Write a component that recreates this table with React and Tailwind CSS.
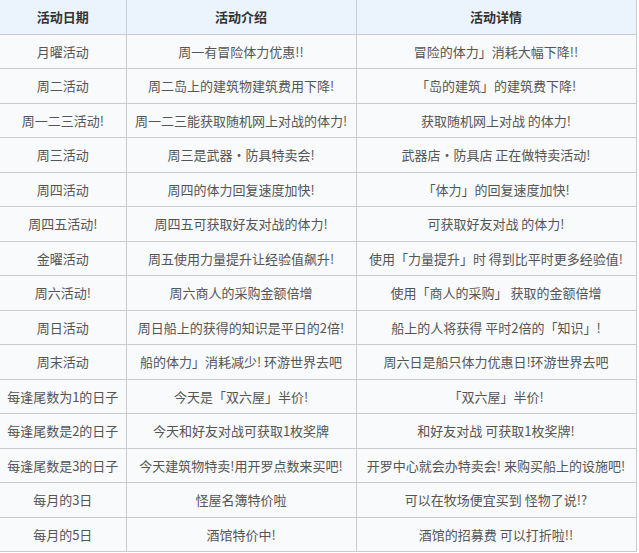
import React from "react";

const rows = [
  ["月曜活动", "周一有冒险体力优惠!!", "冒险的体力」消耗大幅下降!!"],
  ["周二活动", "周二岛上的建筑物建筑费用下降!", "「岛的建筑」的建筑费下降!"],
  ["周一二三活动!", "周一二三能获取随机网上对战的体力!", "获取随机网上对战 的体力!"],
  ["周三活动", "周三是武器・防具特卖会!", "武器店・防具店 正在做特卖活动!"],
  ["周四活动", "周四的体力回复速度加快!", "「体力」的回复速度加快!"],
  ["周四五活动!", "周四五可获取好友对战的体力!", "可获取好友对战 的体力!"],
  ["金曜活动", "周五使用力量提升让经验值飙升!", "使用「力量提升」时 得到比平时更多经验值!"],
  ["周六活动!", "周六商人的采购金额倍增", "使用「商人的采购」 获取的金额倍增"],
  ["周日活动", "周日船上的获得的知识是平日的2倍!", "船上的人将获得 平时2倍的「知识」!"],
  ["周末活动", "船的体力」消耗减少! 环游世界去吧", "周六日是船只体力优惠日!环游世界去吧"],
  ["每逢尾数为1的日子", "今天是「双六屋」半价!", "「双六屋」半价!"],
  ["每逢尾数是2的日子", "今天和好友对战可获取1枚奖牌", "和好友对战 可获取1枚奖牌!"],
  ["每逢尾数是3的日子", "今天建筑物特卖!用开罗点数来买吧!", "开罗中心就会办特卖会! 来购买船上的设施吧!"],
  ["每月的3日", "怪屋名簿特价啦", "可以在牧场便宜买到 怪物了说!?"],
  ["每月的5日", "酒馆特价中!", "酒馆的招募费 可以打折啦!!"],
];

export default function App() {
  return (
    <div
      className="w-[639px] h-[553px] bg-white overflow-hidden"
      style={{ fontFamily: '"Noto Sans CJK SC", "Noto Sans", sans-serif' }}
    >
      <table className="w-[636px] table-fixed border-collapse text-[13px] text-[#555]">
        <colgroup>
          <col className="w-[126px]" />
          <col className="w-[230px]" />
          <col className="w-[280px]" />
        </colgroup>
        <thead>
          <tr className="h-[34px] bg-[#ebf3fc]">
            <th className="border border-[#c8ccd1] border-t-0 border-l-0 font-bold text-[#333]">活动日期</th>
            <th className="border border-[#c8ccd1] border-t-0 font-bold text-[#333]">活动介绍</th>
            <th className="border border-[#c8ccd1] border-t-0 font-bold text-[#333]">活动详情</th>
          </tr>
        </thead>
        <tbody>
          {rows.map((r, i) => (
            <tr key={i} className="h-[34.5px] bg-[#f8fafc]">
              <td className="border border-[#c8ccd1] border-l-0 text-center p-0 whitespace-nowrap">{r[0]}</td>
              <td className="border border-[#c8ccd1] text-center p-0 whitespace-nowrap">{r[1]}</td>
              <td className="border border-[#c8ccd1] text-center p-0 whitespace-nowrap">{r[2]}</td>
            </tr>
          ))}
        </tbody>
      </table>
    </div>
  );
}
